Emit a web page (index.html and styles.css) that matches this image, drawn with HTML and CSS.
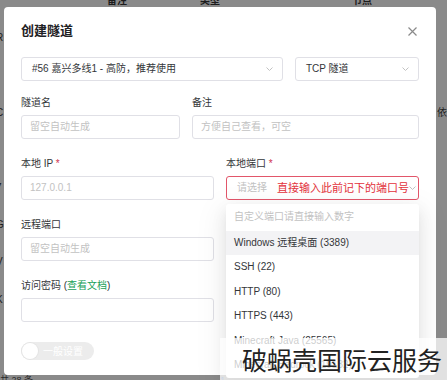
FILE: index.html
```html
<!DOCTYPE html>
<html lang="zh-CN">
<head>
  <meta charset="UTF-8" />
  <meta name="viewport" content="width=device-width, initial-scale=1.0"/>
  <title>创建隧道</title>
  <link rel="stylesheet" href="styles.css">
</head>
<body>
  <div class="backdrop">
    <div class="bg-head">
      <span>备注</span>
      <span>类型</span>
      <span>节点</span>
    </div>
    <ul class="bg-rows">
      <li><span class="cut">R</span></li>
      <li><span class="cut">r</span></li>
      <li><span class="cut">C</span><span class="bg-right">依</span></li>
      <li><span class="cut">\</span></li>
      <li><span class="cut">7</span></li>
      <li><span class="cut">G</span></li>
      <li><span class="cut">V</span></li>
      <li><span class="cut">K</span></li>
    </ul>
    <div class="bg-foot"><span>共 28 条</span><span class="blue">1</span></div>
  </div>

  <div class="modal">
    <div class="modal-head">
      <h2>创建隧道</h2>
      <svg class="close" width="9" height="9" viewBox="0 0 9 9">
        <path d="M0.5 0.5 L8.5 8.5 M8.5 0.5 L0.5 8.5" stroke="#8a8a8a" stroke-width="1.2" fill="none"/>
      </svg>
    </div>

    <div class="row r1">
      <div class="select">
        <span>#56 嘉兴多线1 - 高防，推荐使用</span>
        <svg class="chev" width="7" height="4" viewBox="0 0 7 4"><path d="M0.5 0.5 L3.5 3.5 L6.5 0.5" stroke="#c2c2c2" fill="none"/></svg>
      </div>
      <div class="select">
        <span>TCP 隧道</span>
        <svg class="chev" width="7" height="4" viewBox="0 0 7 4"><path d="M0.5 0.5 L3.5 3.5 L6.5 0.5" stroke="#c2c2c2" fill="none"/></svg>
      </div>
    </div>

    <div class="row r2">
      <div class="item">
        <label>隧道名</label>
        <div class="input placeholder">留空自动生成</div>
      </div>
      <div class="item">
        <label>备注</label>
        <div class="input placeholder">方便自己查看，可空</div>
      </div>
    </div>

    <div class="row r3">
      <div class="item">
        <label>本地 IP <em>*</em></label>
        <div class="input placeholder">127.0.0.1</div>
      </div>
      <div class="item">
        <label>本地端口 <em>*</em></label>
        <div class="select error">
          <span class="placeholder">请选择</span>
          <span class="note">直接输入此前记下的端口号</span>
          <svg class="chev" width="7" height="4" viewBox="0 0 7 4"><path d="M0.5 0.5 L3.5 3.5 L6.5 0.5" stroke="#c2c2c2" fill="none"/></svg>
          <div class="dropdown">
            <div class="hint">自定义端口请直接输入数字</div>
            <ul class="options">
              <li class="pending">Windows 远程桌面 (3389)</li>
              <li>SSH (22)</li>
              <li>HTTP (80)</li>
              <li>HTTPS (443)</li>
              <li>Minecraft Java (25565)</li>
              <li>Minecraft Bedrock (19132)</li>
            </ul>
          </div>
        </div>
      </div>
    </div>

    <div class="row single">
      <div class="item">
        <label>远程端口</label>
        <div class="input placeholder">留空自动生成</div>
      </div>
    </div>

    <div class="row single">
      <div class="item">
        <label>访问密码 (<a href="#">查看文档</a>)</label>
        <div class="input"></div>
      </div>
    </div>

    <div class="switch">
      <span class="knob"></span>
      <span class="switch-text">一般设置</span>
    </div>
  </div>

  <div class="watermark">破蜗壳国际云服务</div>
</body>
</html>
```

FILE: styles.css
```css
* {
  box-sizing: border-box;
}

body {
  margin: 0;
  width: 447px;
  height: 380px;
  overflow: hidden;
  position: relative;
  background: #8a8a8a;
  font-family: "Liberation Sans", "Noto Sans CJK SC", sans-serif;
  font-size: 10px;
  color: #333639;
}

/* dimmed page behind the modal */
.backdrop {
  color: #1c1c1c;
}

.bg-head {
  display: grid;
  grid-template-columns: 93px 152px auto;
  padding-left: 107px;
  margin-top: -6px;
  height: 14px;
  line-height: 14px;
  font-weight: bold;
}

.bg-rows {
  list-style: none;
  margin: 0;
  padding: 11px 0 0;
}

.bg-rows li {
  display: flex;
  justify-content: space-between;
  height: 37.4px;
  line-height: 37.4px;
}

.cut {
  margin-left: -4px;
}

.bg-right {
  margin-right: -2px;
  width: 12px;
}

.bg-foot {
  display: flex;
  justify-content: space-between;
  width: 225px;
  margin-top: 57px;
  font-size: 9px;
  line-height: 10px;
  color: #2a2a2a;
}

.bg-foot .blue {
  color: #2d5fa8;
}

/* modal */
.modal {
  position: absolute;
  left: 4px;
  top: 7px;
  width: 432px;
  height: 368px;
  background: #fff;
  border-radius: 4px;
  padding: 16px 17px 0;
}

.modal-head {
  display: flex;
  justify-content: space-between;
  align-items: center;
  height: 16px;
  margin-bottom: 18px;
}

.modal-head h2 {
  margin: 0;
  font-size: 13px;
  line-height: 16px;
  font-weight: 600;
  color: #1f2225;
}

.close {
  margin-right: 2px;
}

.row {
  display: grid;
  gap: 12px;
}

.r1 {
  grid-template-columns: minmax(0, 1fr) 124px;
  margin-bottom: 13.5px;
}

.r2 {
  grid-template-columns: 159px minmax(0, 1fr);
}

.r3 {
  grid-template-columns: repeat(2, minmax(0, 1fr));
}

.single {
  grid-template-columns: 193px minmax(0, 1fr);
}

.item {
  margin-bottom: 17px;
}

.item label {
  display: block;
  height: 16px;
  line-height: 16px;
  margin-bottom: 4px;
}

.item em {
  font-style: normal;
  color: #d03050;
}

.item a {
  color: #18a058;
  text-decoration: none;
}

.input,
.select {
  height: 24px;
  line-height: 22px;
  border: 1px solid #e0e0e6;
  border-radius: 3px;
  white-space: nowrap;
}

.input {
  padding: 0 8px;
}

.select {
  display: flex;
  align-items: center;
  padding: 0 9px 0 10px;
  position: relative;
}

.select .chev {
  margin-left: auto;
  flex-shrink: 0;
}

.placeholder {
  color: #c2c2c2;
}

.select.error {
  border-color: #e2566a;
}

.note {
  margin-left: 10px;
  font-size: 11px;
  color: #e3323c;
  flex-shrink: 0;
}

/* port options popover */
.dropdown {
  position: absolute;
  left: -1px;
  right: -1px;
  top: 27px;
  background: #fff;
  border-radius: 3px;
  padding-top: 1.5px;
  box-shadow: 0 3px 6px -4px rgba(0, 0, 0, .12), 0 6px 16px 0 rgba(0, 0, 0, .08), 0 9px 28px 8px rgba(0, 0, 0, .05);
  z-index: 2;
}

.hint {
  height: 24px;
  line-height: 24px;
  padding-left: 8px;
  color: #c2c2c2;
}

.options {
  list-style: none;
  margin: 1.5px 0 0;
  padding: 0;
}

.options li {
  height: 24.5px;
  line-height: 24.5px;
  padding-left: 8px;
  color: #333639;
}

.options li.pending {
  background: #f3f3f5;
}

/* switch */
.switch {
  display: inline-flex;
  align-items: center;
  width: 73px;
  height: 18px;
  margin-top: 3px;
  padding: 0 1px;
  border-radius: 9px;
  background: #ececec;
}

.knob {
  width: 16px;
  height: 16px;
  border-radius: 50%;
  background: #fff;
  box-shadow: 0 0 0 1px #e4e4e4;
}

.switch-text {
  margin-left: 5px;
  color: #fff;
}

/* watermark band */
.watermark {
  position: absolute;
  left: 220px;
  top: 338px;
  width: 227px;
  height: 42px;
  padding: 6px 0 0 22px;
  background: rgba(255, 255, 255, .75);
  font-family: "Noto Sans CJK SC", sans-serif;
  font-size: 25px;
  line-height: 30px;
  color: #222;
  white-space: nowrap;
  z-index: 3;
}
```
